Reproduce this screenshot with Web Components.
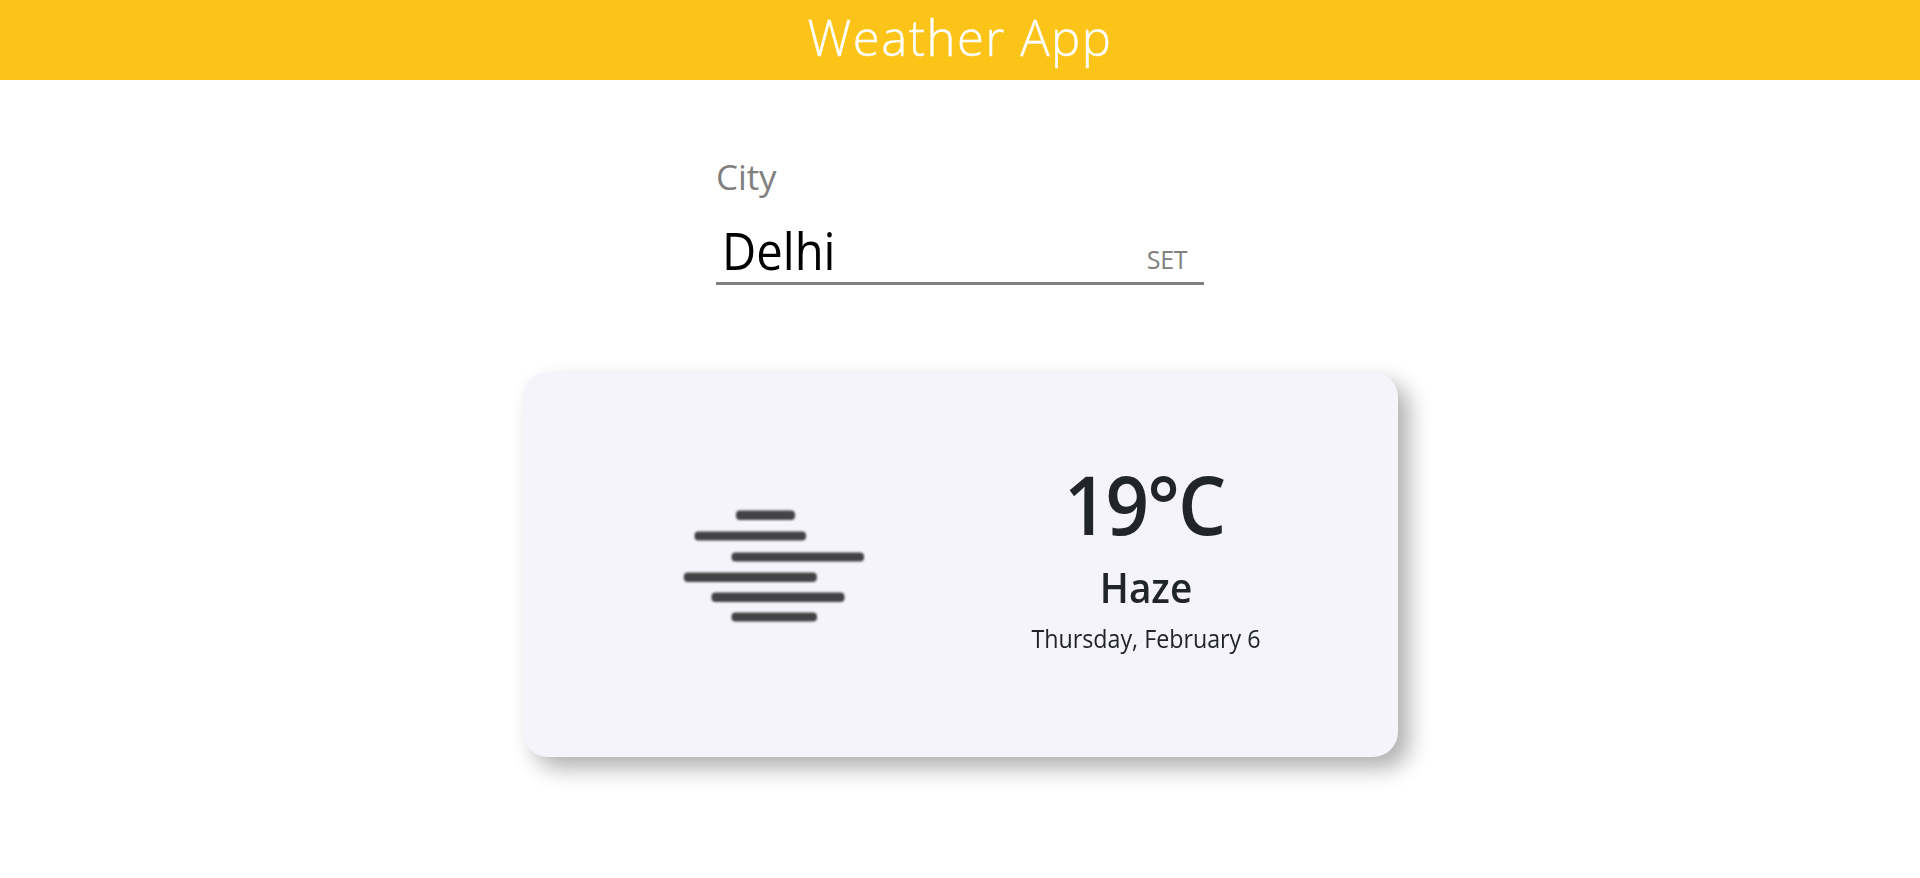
<!DOCTYPE html>
<html lang="en">
<head>
<meta charset="utf-8">
<title>Weather App</title>
<style>
body{margin:0;min-height:100vh;background:#fff;font-family:"Open Sans","Noto Sans",sans-serif;color:#212529}
</style>
</head>
<body>
<weather-app></weather-app>
<script>
const define=(name,html)=>customElements.define(name,class extends HTMLElement{
  constructor(){
    super();
    const t=document.createElement('template');
    t.innerHTML=html;
    this.attachShadow({mode:'open'}).append(t.content.cloneNode(true));
  }
});

define('app-header',`<style>
:host{display:block;height:80px;background:#fcc419;color:#fff;text-align:center}
h1{margin:0;font-size:49px;font-weight:300;line-height:74px;letter-spacing:1.5px;-webkit-text-stroke:.4px #fff}
</style><h1><slot></slot></h1>`);

define('city-form',`<style>
:host{display:block;width:488px;margin:74px auto 0;color:#808080}
.label{font-size:35px;line-height:46px;letter-spacing:-.1px}
.row{display:flex;align-items:baseline;justify-content:space-between;margin-top:20px;padding:0 17px 2px 6px;border-bottom:3px solid #808080}
.value{font-size:51px;line-height:60px;color:#000;transform:scaleX(.925);transform-origin:left}
.set{font-size:25px;line-height:30px;letter-spacing:-.4px;transform:translateY(-1px)}
</style><div class="label">City</div>
<div class="row"><span class="value"><slot></slot></span><span class="set">SET</span></div>`);

define('haze-icon',`<style>
:host{display:block;width:210px;height:140px}
svg{display:block;filter:blur(.9px)}
</style><svg width="210" height="140" viewBox="0 0 210 140" fill="#434345">
<rect x="66" y="15.5" width="59" height="9.5" rx="4"/>
<rect x="24.5" y="36.5" width="111.5" height="9" rx="4"/>
<rect x="61.5" y="57.5" width="132.5" height="9" rx="4"/>
<rect x="13.8" y="77.5" width="133" height="9.5" rx="4"/>
<rect x="41.5" y="97.5" width="133" height="9.5" rx="4"/>
<rect x="61.5" y="117.5" width="85.5" height="9" rx="4"/>
</svg>`);

define('weather-card',`<style>
:host{display:flex;box-sizing:border-box;width:875px;height:385px;margin:87px 0 0 523px;padding:84px 0 0 147px;border-radius:25px;background:#f5f4fa;box-shadow:11px 11px 22px #b0b0b0}
.icon{margin-top:39px}
.info{width:330px;margin-left:101px;text-align:center}
.temp{font-size:81px;line-height:96px;font-weight:600;letter-spacing:-2px;padding-right:4px;transform:scaleX(.94)}
.state{margin-top:11px;font-size:41px;line-height:48px;font-weight:600;transform:scaleX(.945)}
.date{margin-top:12px;font-size:25px;line-height:30px;transform:scaleX(.93)}
</style><div class="icon"><slot name="icon"></slot></div>
<div class="info"><div class="temp"><slot name="temp"></slot></div>
<div class="state"><slot name="state"></slot></div>
<div class="date"><slot name="date"></slot></div></div>`);

define('weather-app',`<style>:host{display:flow-root;min-height:878px}</style>
<app-header>Weather App</app-header>
<city-form>Delhi</city-form>
<weather-card><haze-icon slot="icon"></haze-icon><span slot="temp">19°C</span><span slot="state">Haze</span><span slot="date">Thursday, February 6</span></weather-card>`);
</script>
</body>
</html>
